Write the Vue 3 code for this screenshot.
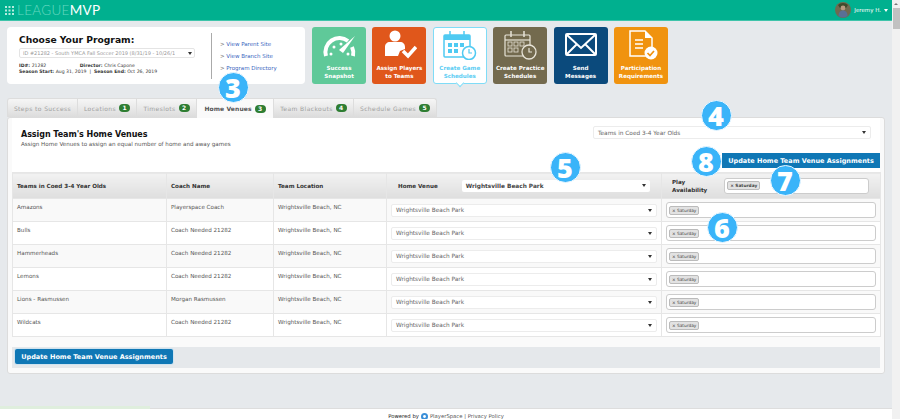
<template>
  <div class="page">
    <div class="main">
      <header class="topbar">
        <div class="logo">
          <svg class="logo-dots" viewBox="0 0 9 9">
            <rect v-for="d in logoDots" :key="d.k" :x="d.x" :y="d.y" width="2" height="2" fill="#b5ecdf" />
          </svg>
          <span class="logo-league">LEAGUE</span><span class="logo-mvp">MVP</span>
        </div>
        <div class="user">
          <svg class="avatar" viewBox="0 0 16 16">
            <circle cx="8" cy="8" r="8" fill="#6f6a50" />
            <path d="M3 3a7 7 0 0 1 10 0l-2 3H5z" fill="#3f4a2c" />
            <circle cx="8" cy="6" r="2.4" fill="#b89a80" />
            <path d="M3.5 14c0-4 2-5.500 4.500-5.500s4.500 1.500 4.500 5.500a8 8 0 0 1-9 0z" fill="#5a6f95" />
          </svg>
          <span>Jeremy H.</span>
          <i class="caret white"></i>
        </div>
      </header>

      <section class="top-row">
        <div class="program-card">
          <div class="program-left">
            <h2>Choose Your Program:</h2>
            <div class="program-select">
              <span>ID #21282 - South YMCA Fall Soccer 2019 (8/31/19 - 10/26/1</span>
              <i class="caret"></i>
            </div>
            <div class="meta">
              <div><b>ID#:</b> 21282 <b class="director">Director:</b> Chris Capone</div>
              <div><b>Season Start:</b> Aug 31, 2019 &nbsp;|&nbsp; <b>Season End:</b> Oct 26, 2019</div>
            </div>
          </div>
          <div class="program-links">
            <div v-for="l in links" :key="l">&gt; <a>{{ l }}</a></div>
          </div>
        </div>

        <div class="tiles">
          <div class="tile green">
            <svg viewBox="0 0 36 30">
              <path d="M5 26a14 14 0 0 1 22-15" fill="none" stroke="#fff" stroke-width="4" />
              <path d="M31 17a14 14 0 0 1 1 9" fill="none" stroke="#fff" stroke-width="4" />
              <path d="M34 6 22 23l-4-3z" fill="#fff" />
              <circle cx="10" cy="24" r="1.500" fill="#fff" /><circle cx="13" cy="17" r="1.500" fill="#fff" />
              <circle cx="20" cy="14" r="1.500" fill="#fff" /><circle cx="27" cy="24" r="1.500" fill="#fff" />
            </svg>
            <span>Success<br />Snapshot</span>
          </div>
          <div class="tile orange">
            <svg viewBox="0 0 36 30">
              <circle cx="14" cy="6" r="5.500" fill="#fff" />
              <path d="M4 26V17c0-3 2-5 5-5h10c3 0 5 2 5 5v2l-5 2-2 5z" fill="#fff" />
              <path d="M22 21l5 5 8-9" fill="none" stroke="#fff" stroke-width="3.500" />
            </svg>
            <span>Assign Players<br />to Teams</span>
          </div>
          <div class="tile active">
            <svg viewBox="0 0 36 30">
              <rect x="2" y="5" width="26" height="22" rx="1" fill="none" stroke="#4fcaf2" stroke-width="1.500" />
              <rect x="2" y="5" width="26" height="5" fill="#4fcaf2" />
              <path d="M8 1v6M22 1v6" stroke="#4fcaf2" stroke-width="1.500" />
              <g fill="#4fcaf2">
                <rect x="6" y="13" width="4" height="4" /><rect x="12" y="13" width="4" height="4" /><rect x="18" y="13" width="4" height="4" />
                <rect x="6" y="19" width="4" height="4" /><rect x="12" y="19" width="4" height="4" />
              </g>
              <circle cx="27" cy="23" r="6.500" fill="#fff" stroke="#4fcaf2" stroke-width="1.500" />
              <path d="M27 19v4h3" fill="none" stroke="#4fcaf2" stroke-width="1.200" />
            </svg>
            <span>Create Game<br />Schedules</span>
          </div>
          <div class="tile brown">
            <svg viewBox="0 0 36 30">
              <rect x="3" y="5" width="25" height="21" rx="1" fill="none" stroke="#e8e4d8" stroke-width="1.200" />
              <path d="M3 10h25" stroke="#e8e4d8" stroke-width="1.200" />
              <path d="M9 1v6M22 1v6" stroke="#e8e4d8" stroke-width="1.500" />
              <g fill="none" stroke="#e8e4d8" stroke-width=".8">
                <rect x="6" y="12" width="4" height="4" /><rect x="12" y="12" width="4" height="4" /><rect x="18" y="12" width="4" height="4" />
                <rect x="6" y="18" width="4" height="4" /><rect x="12" y="18" width="4" height="4" />
              </g>
              <circle cx="27" cy="22" r="7" fill="#736a4e" stroke="#e8e4d8" stroke-width="1.300" />
              <path d="M27 18v4h3" fill="none" stroke="#e8e4d8" stroke-width="1.200" />
            </svg>
            <span>Create Practice<br />Schedules</span>
          </div>
          <div class="tile navy">
            <svg viewBox="0 0 36 30">
              <rect x="3" y="4" width="30" height="21" rx="1" fill="none" stroke="#fff" stroke-width="2" />
              <path d="M4 5l14 13L32 5M4 24l10-10M32 24 22 14" fill="none" stroke="#fff" stroke-width="2" />
            </svg>
            <span>Send<br />Messages</span>
          </div>
          <div class="tile amber">
            <svg viewBox="0 0 36 30">
              <path d="M7 1h15l7 7v18H7z" fill="none" stroke="#fff" stroke-width="1.500" />
              <path d="M22 1v7h7" fill="#fff" />
              <path d="M12 10h8M12 14h8M12 18h8" stroke="#fff" stroke-width="1.300" />
              <circle cx="28" cy="23" r="6.500" fill="#fff" />
              <path d="M24.500 23l2.500 2.500 4-4.500" fill="none" stroke="#f0930f" stroke-width="1.700" />
            </svg>
            <span>Participation<br />Requirements</span>
          </div>
        </div>
      </section>

      <nav class="tabs">
        <div v-for="t in tabs" :key="t.label" class="tab" :class="{ current: t.current }" :style="{ width: t.width + 'px' }">
          {{ t.label }}
          <span v-if="t.badge" class="badge">{{ t.badge }}</span>
        </div>
      </nav>

      <section class="panel">
        <div class="panel-head">
          <div class="panel-title">
            <h3>Assign Team's Home Venues</h3>
            <p>Assign Home Venues to assign an equal number of home and away games</p>
          </div>
          <div class="fake-select division">
            <span>Teams in Coed 3-4 Year Olds</span>
            <i class="caret"></i>
          </div>
        </div>

        <div class="action-row">
          <button class="update-btn">Update Home Team Venue Assignments</button>
        </div>

        <table class="venues">
          <colgroup>
            <col class="c1" /><col class="c2" /><col class="c3" /><col class="c4" /><col class="c5" />
          </colgroup>
          <thead>
            <tr>
              <th>Teams in Coed 3-4 Year Olds</th>
              <th>Coach Name</th>
              <th>Team Location</th>
              <th>
                <div class="th-venue">
                  <span>Home Venue</span>
                  <div class="fake-select head-select">
                    <b>Wrightsville Beach Park</b>
                    <i class="caret"></i>
                  </div>
                </div>
              </th>
              <th>
                <div class="th-play">
                  <span>Play<br />Availability</span>
                  <div class="tag-input head-tags"><span class="tag head-tag">× Saturday</span></div>
                </div>
              </th>
            </tr>
          </thead>
          <tbody>
            <tr v-for="r in rows" :key="r.team">
              <td>{{ r.team }}</td>
              <td>{{ r.coach }}</td>
              <td>Wrightsville Beach, NC</td>
              <td class="ctl">
                <div class="fake-select">
                  <span>Wrightsville Beach Park</span>
                  <i class="caret"></i>
                </div>
              </td>
              <td class="ctl">
                <div class="tag-input"><span class="tag">× Saturday</span></div>
              </td>
            </tr>
          </tbody>
        </table>

        <div class="bottom-bar">
          <button class="update-btn rounded">Update Home Team Venue Assignments</button>
        </div>
      </section>

      <div class="spacer"></div>
      <footer class="foot">
        <span class="progress"></span>
        <b>Powered by</b>
        <svg class="ps-logo" viewBox="0 0 8 8">
          <circle cx="4" cy="4" r="4" fill="#3a8fd8" />
          <circle cx="4" cy="4" r="1.600" fill="#fff" />
        </svg>
        PlayerSpace | Privacy Policy
      </footer>

      <span v-for="m in markers" :key="m.n" class="marker" :class="'m' + m.n">{{ m.n }}</span>
    </div>

    <aside class="scrollbar">
      <i class="scroll-up"></i>
      <div class="thumb"></div>
    </aside>
  </div>
</template>

<script setup>
const logoDots = []
for (let y = 0; y < 3; y++) {
  for (let x = 0; x < 3; x++) {
    logoDots.push({ k: `${x}-${y}`, x: x * 3.5, y: y * 3.5 })
  }
}

const links = ['View Parent Site', 'View Branch Site', 'Program Directory']

const tabs = [
  { label: 'Steps to Success', width: 71 },
  { label: 'Locations', badge: 1, width: 59 },
  { label: 'Timeslots', badge: 2, width: 60 },
  { label: 'Home Venues', badge: 3, width: 77, current: true },
  { label: 'Team Blackouts', badge: 4, width: 80 },
  { label: 'Schedule Games', badge: 5, width: 83 }
]

const rows = [
  { team: 'Amazons', coach: 'Playerspace Coach' },
  { team: 'Bulls', coach: 'Coach Needed 21282' },
  { team: 'Hammerheads', coach: 'Coach Needed 21282' },
  { team: 'Lemons', coach: 'Coach Needed 21282' },
  { team: 'Lions - Rasmussen', coach: 'Morgan Rasmussen' },
  { team: 'Wildcats', coach: 'Coach Needed 21282' }
]

const markers = [{ n: 3 }, { n: 4 }, { n: 5 }, { n: 6 }, { n: 7 }, { n: 8 }]
</script>

<style>
html, body { margin: 0; height: 100%; overflow: hidden; }
</style>

<style scoped>
* { box-sizing: border-box; }

.page {
  display: flex;
  width: 900px;
  height: 419px;
  overflow: hidden;
  background: #e6e9ec;
  font-family: "DejaVu Sans", Verdana, sans-serif;
  font-size: 6px;
  color: #444;
}
.main {
  position: relative;
  width: 892px;
  display: flex;
  flex-direction: column;
}

.scrollbar {
  width: 8px;
  background: #f1f1f1;
  display: flex;
  flex-direction: column;
  align-items: center;
  padding-top: 3px;
}
.scroll-up {
  border-left: 2px solid transparent;
  border-right: 2px solid transparent;
  border-bottom: 2px solid #777;
}
.thumb {
  width: 7px;
  height: 21px;
  margin-top: 3px;
  background: #c1c1c1;
}

.topbar {
  height: 21px;
  flex: none;
  background: #00b08f;
  border-bottom: 1px solid #3fc4aa;
  display: flex;
  align-items: center;
  justify-content: space-between;
  padding: 0 4px 0 5px;
}
.logo {
  display: flex;
  align-items: center;
  font-family: Lato, "Open Sans", sans-serif;
  font-size: 13.5px;
  letter-spacing: 0.3px;
}
.logo-dots { width: 9px; height: 9px; margin-right: 3px; }
.logo-league { color: #66d8c0; font-weight: 300; }
.logo-mvp { color: #fff; }
.user {
  display: flex;
  align-items: center;
  gap: 3px;
  color: #fff;
  font-size: 5.5px;
}
.avatar { width: 16px; height: 16px; }

.caret {
  display: inline-block;
  flex: none;
  width: 0;
  height: 0;
  border-left: 2px solid transparent;
  border-right: 2px solid transparent;
  border-top: 3px solid #333;
}
.caret.white { border-top-color: #fff; }

.top-row {
  display: flex;
  gap: 7px;
  height: 57px;
  margin: 6px 0 0 7px;
  flex: none;
}
.program-card {
  width: 298px;
  background: #fff;
  border-radius: 4px;
  display: flex;
  padding: 6px 0 5px 12px;
}
.program-left {
  width: 193px;
  border-right: 1px solid #aaa;
  padding-right: 16px;
}
.program-left h2 {
  margin: 1px 0 2px;
  font-size: 9.2px;
  font-weight: 700;
  color: #111;
  line-height: 12px;
}
.program-select {
  height: 10px;
  border: 1px solid #e4e4e4;
  border-radius: 2px;
  display: flex;
  align-items: center;
  justify-content: space-between;
  padding: 0 2px 0 3px;
  color: #999;
  font-size: 5px;
  white-space: nowrap;
  overflow: hidden;
}
.program-select span { overflow: hidden; }
.meta {
  margin-top: 4.5px;
  font-size: 4.6px;
  line-height: 6px;
  color: #333;
  white-space: nowrap;
}
.director { margin-left: 32px; }
.program-links {
  padding: 5px 0 0 8px;
  font-size: 5.5px;
  color: #777;
}
.program-links div { height: 12px; line-height: 12px; }
.program-links a { color: #3a66c0; }

.tiles { display: flex; gap: 6.4px; }
.tile {
  width: 54px;
  height: 57px;
  border-radius: 3px;
  display: flex;
  flex-direction: column;
  align-items: center;
  color: #fff;
  font-size: 5.6px;
  font-weight: 700;
  line-height: 7.5px;
  text-align: center;
  padding-top: 3px;
  white-space: nowrap;
  position: relative;
}
.tile svg { width: 36px; height: 30px; margin-bottom: 5px; }
.green { background: #5fc999; }
.orange { background: #e0571b; }
.active {
  background: #fff;
  border: 1px solid #7fdcf7;
  color: #5ccdf3;
  padding-top: 2px;
}
.active::after {
  content: "";
  position: absolute;
  left: 50%;
  bottom: -3px;
  width: 5px;
  height: 5px;
  margin-left: -2.5px;
  background: #fff;
  border-right: 1px solid #7fdcf7;
  border-bottom: 1px solid #7fdcf7;
  transform: rotate(45deg);
}
.brown { background: #736a4e; }
.navy { background: #0b4a7c; }
.amber { background: #f0930f; }

.tabs {
  display: flex;
  margin: 14px 0 0 7px;
  height: 19px;
  flex: none;
}
.tab {
  display: flex;
  align-items: center;
  justify-content: center;
  gap: 3px;
  background: linear-gradient(#f6f6f6, #dcdcdc);
  border: 1px solid #ddd;
  border-bottom: none;
  border-left: none;
  color: #a0a0a0;
  font-size: 6px;
  letter-spacing: 0.4px;
  white-space: nowrap;
}
.tab:first-child { border-left: 1px solid #ddd; border-radius: 3px 0 0 0; }
.tab:last-child { border-radius: 0 3px 0 0; }
.tab.current {
  background: #fafafa;
  color: #555;
  font-weight: 700;
  letter-spacing: 0.1px;
  height: 20px;
  position: relative;
  z-index: 1;
}
.badge {
  display: inline-block;
  width: 11px;
  height: 8px;
  border-radius: 4px;
  background: #2e7d32;
  color: #fff;
  font-size: 6px;
  font-weight: 700;
  line-height: 8px;
  letter-spacing: 0;
  text-align: center;
}

.panel {
  width: 878px;
  height: 257px;
  margin-left: 7px;
  flex: none;
  background: #fafafa;
  border: 1px solid #dcdcdc;
  border-radius: 3px;
  padding: 0 4px;
}
.panel-head {
  display: flex;
  justify-content: space-between;
  height: 35px;
  background: #fff;
  padding: 8px 9px 0 9px;
}
.panel-title h3 {
  margin: 3px 0 1px;
  font-size: 8px;
  font-weight: 700;
  letter-spacing: -0.05px;
  color: #111;
  line-height: 11px;
}
.panel-title p {
  margin: 0;
  font-size: 5.6px;
  line-height: 7px;
  color: #555;
}
.fake-select {
  height: 13px;
  background: #fff;
  border: 1px solid #ececec;
  border-radius: 2px;
  display: flex;
  align-items: center;
  justify-content: space-between;
  padding: 0 4px;
  font-size: 5.8px;
  color: #666;
}
.division { width: 278px; }

.action-row {
  display: flex;
  justify-content: flex-end;
  height: 19px;
  background: #fff;
}
.update-btn {
  height: 15px;
  width: 158px;
  padding: 0;
  border: none;
  background: #0f77b5;
  color: #fff;
  font-family: inherit;
  font-size: 6.5px;
  font-weight: 700;
  white-space: nowrap;
}
.update-btn.rounded {
  border-radius: 2px;
  box-shadow: 0 0 0 1px #cfe3ef;
}

.venues {
  width: 868px;
  table-layout: fixed;
  border-collapse: collapse;
  background: #fff;
}
.c1 { width: 154px; }
.c2 { width: 107px; }
.c3 { width: 113px; }
.c4 { width: 275px; }
.c5 { width: 219px; }
.venues th {
  height: 26px;
  padding: 0 4px;
  background: linear-gradient(#f2f2f2, #dedede);
  border: 1px solid #e6e6e6;
  color: #333;
  font-size: 5.6px;
  font-weight: 700;
  text-align: left;
}
.venues td {
  height: 23px;
  padding: 4px;
  border: 1px solid #e6e6e6;
  color: #555;
  font-size: 5.6px;
  line-height: 8px;
  vertical-align: top;
  white-space: nowrap;
}
.venues tbody tr:nth-child(odd) td { background: #f9f9f9; }
.venues td.ctl { vertical-align: middle; padding: 2px 4px; }
.th-venue {
  display: flex;
  align-items: center;
  padding-left: 7px;
  gap: 24px;
  margin-right: 7px;
}
.head-select {
  flex: 1;
  height: 12px;
  border: none;
  font-weight: 700;
  font-size: 5.8px;
  color: #444;
}
.th-play {
  display: flex;
  align-items: center;
  padding-left: 6px;
  gap: 17px;
  margin-right: 7px;
  line-height: 8px;
}
.tag-input {
  height: 16px;
  background: #fff;
  border: 1px solid #ccc;
  border-radius: 3px;
  display: flex;
  align-items: center;
  padding-left: 2px;
}
.head-tags { flex: 1; }
.tag {
  height: 9px;
  padding: 0 2px;
  background: #e2e2e2;
  border: 1px solid #bbb;
  border-radius: 2px;
  color: #444;
  font-size: 4.3px;
  font-weight: 400;
  line-height: 7px;
}
.head-tag { font-weight: 700; }

.bottom-bar {
  height: 21px;
  margin-top: 10px;
  background: #e5e8eb;
  padding: 2px 3px;
  display: flex;
}

.spacer { flex: 1; }
.foot {
  position: relative;
  height: 11px;
  flex: none;
  background: #fff;
  border-top: 1px solid #ddd;
  display: flex;
  justify-content: center;
  align-items: flex-start;
  gap: 2px;
  padding-top: 4px;
  color: #555;
  font-size: 5.3px;
  line-height: 7px;
  white-space: nowrap;
}
.foot b { color: #222; font-weight: 400; }
.ps-logo { width: 7px; height: 7px; }
.progress {
  position: absolute;
  left: 0;
  top: -3px;
  width: 150px;
  height: 3px;
  background: #dfeedd;
}

.marker {
  position: absolute;
  z-index: 5;
  width: 31px;
  height: 31px;
  margin: -15.5px 0 0 -15.5px;
  border-radius: 50%;
  background: #3ab4f9;
  border: 1px solid #eaf7ff;
  color: #fff;
  font-family: "Open Sans", sans-serif;
  font-size: 27px;
  font-weight: 800;
  line-height: 29px;
  text-align: center;
}
.m3 { left: 233px; top: 87px; }
.m4 { left: 716px; top: 115px; }
.m5 { left: 565px; top: 167px; }
.m6 { left: 722px; top: 227px; }
.m7 { left: 785px; top: 180px; }
.m8 { left: 706px; top: 161px; }
</style>
